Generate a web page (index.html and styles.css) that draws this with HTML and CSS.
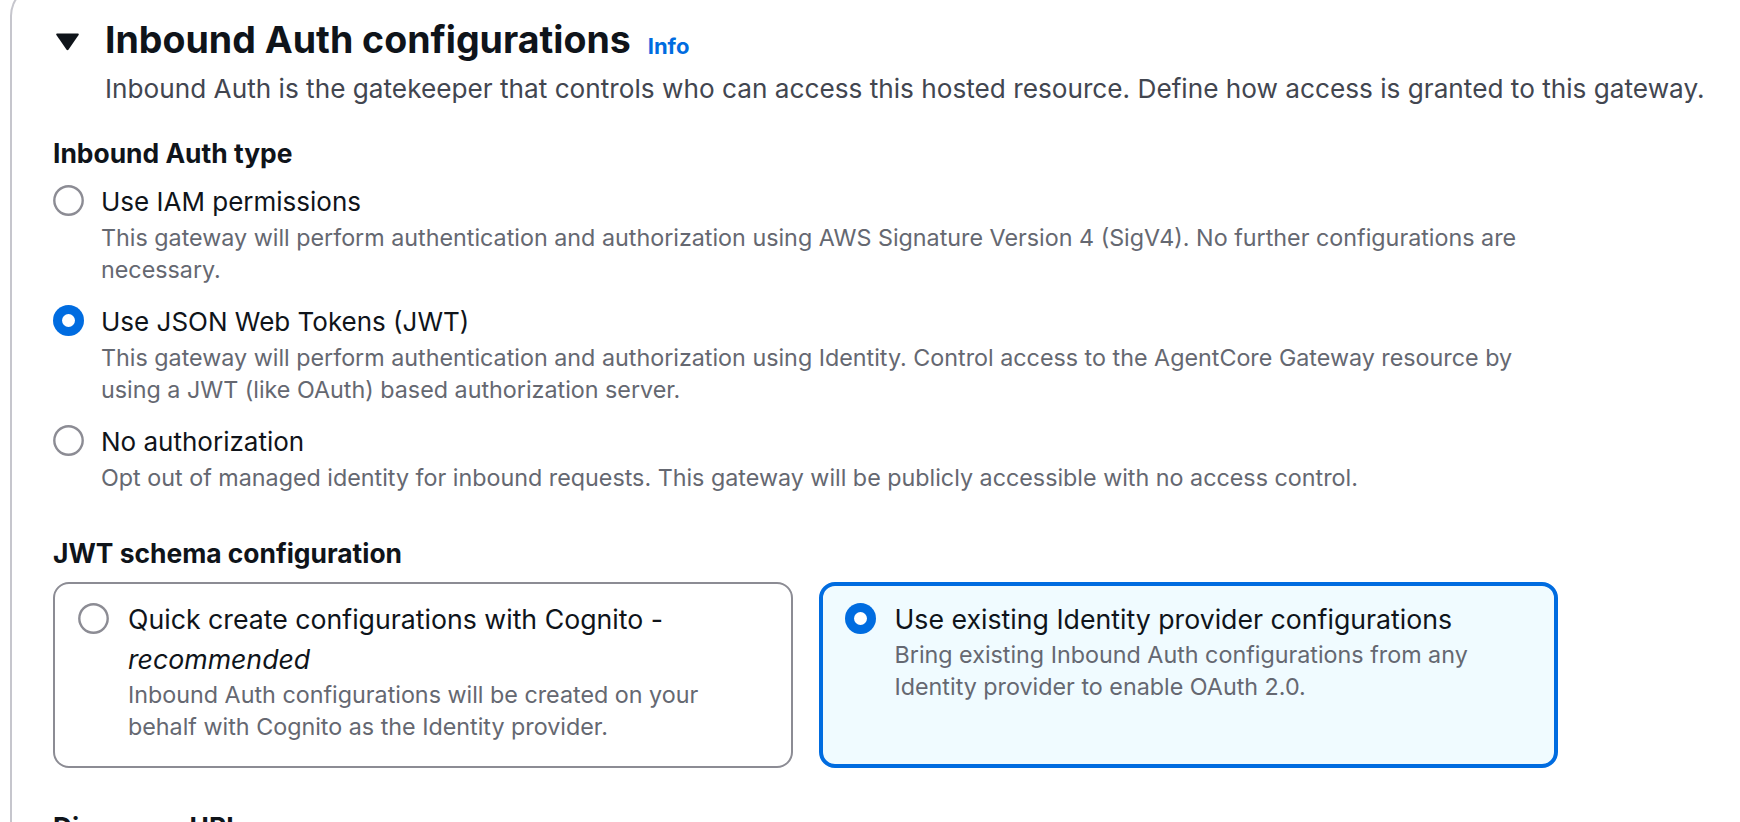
FILE: index.html
```html
<!DOCTYPE html>
<html lang="en">
<head>
<meta charset="utf-8">
<title>Inbound Auth configurations</title>
<link rel="stylesheet" href="styles.css">
</head>
<body>
<div class="container">
  <div class="section-header">
    <span class="caret">
      <svg viewBox="0 0 25 19" width="25" height="19" aria-hidden="true"><path d="M2 1.5 H23 Q24.5 1.5 23.6 3 L13.6 17.6 Q12.5 19 11.4 17.6 L1.4 3 Q0.5 1.5 2 1.5 Z" fill="#0f141a"/></svg>
    </span>
    <h2 class="title">Inbound Auth configurations<a class="info" href="#">Info</a></h2>
  </div>
  <p class="header-desc">Inbound Auth is the gatekeeper that controls who can access this hosted resource. Define how access is granted to this gateway.</p>

  <div class="content">
    <div class="field">
      <div class="field-label">Inbound Auth type</div>
      <div class="radio-group">
        <div class="radio">
          <svg class="radio-ctl" viewBox="0 0 31 31" aria-hidden="true"><circle cx="15.5" cy="15.5" r="14.2" fill="#fff" stroke="#8c8c94" stroke-width="2.4"/></svg>
          <div class="radio-text">
            <div class="radio-label">Use IAM permissions</div>
            <div class="radio-desc">This gateway will perform authentication and authorization using AWS Signature Version 4 (SigV4). No further configurations are<br>necessary.</div>
          </div>
        </div>
        <div class="radio">
          <svg class="radio-ctl" viewBox="0 0 31 31" aria-hidden="true"><circle cx="15.5" cy="15.5" r="15.5" fill="#006ce0"/><circle cx="15.5" cy="15.5" r="6.5" fill="#fff"/></svg>
          <div class="radio-text">
            <div class="radio-label">Use JSON Web Tokens (JWT)</div>
            <div class="radio-desc">This gateway will perform authentication and authorization using Identity. Control access to the AgentCore Gateway resource by<br>using a JWT (like OAuth) based authorization server.</div>
          </div>
        </div>
        <div class="radio">
          <svg class="radio-ctl" viewBox="0 0 31 31" aria-hidden="true"><circle cx="15.5" cy="15.5" r="14.2" fill="#fff" stroke="#8c8c94" stroke-width="2.4"/></svg>
          <div class="radio-text">
            <div class="radio-label">No authorization</div>
            <div class="radio-desc">Opt out of managed identity for inbound requests. This gateway will be publicly accessible with no access control.</div>
          </div>
        </div>
      </div>
    </div>

    <div class="field">
      <div class="field-label">JWT schema configuration</div>
      <div class="tiles">
        <div class="tile">
          <svg class="radio-ctl" viewBox="0 0 31 31" aria-hidden="true"><circle cx="15.5" cy="15.5" r="14.2" fill="#fff" stroke="#8c8c94" stroke-width="2.4"/></svg>
          <div class="radio-text">
            <div class="tile-label">Quick create configurations with Cognito - <em>recommended</em></div>
            <div class="radio-desc">Inbound Auth configurations will be created on your<br>behalf with Cognito as the Identity provider.</div>
          </div>
        </div>
        <div class="tile selected">
          <svg class="radio-ctl" viewBox="0 0 31 31" aria-hidden="true"><circle cx="15.5" cy="15.5" r="15.5" fill="#006ce0"/><circle cx="15.5" cy="15.5" r="6.5" fill="#fff"/></svg>
          <div class="radio-text">
            <div class="tile-label">Use existing Identity provider configurations</div>
            <div class="radio-desc">Bring existing Inbound Auth configurations from any<br>Identity provider to enable OAuth 2.0.</div>
          </div>
        </div>
      </div>
    </div>

    <div class="field">
      <div class="field-label">Discovery URL</div>
    </div>
  </div>
</div>
</body>
</html>
```

FILE: styles.css
```css
html, body {
  margin: 0;
  background: #ffffff;
}

body {
  font-family: Inter, Roboto, "Liberation Sans", sans-serif;
  color: #0f141a;
  overflow: hidden;
  height: 822px;
}

.container {
  margin: -16px 0 0 10px;
  border-top: 2px solid #c6c6cd;
  border-left: 2px solid #c6c6cd;
  border-top-left-radius: 32px;
  padding: 33px 0 0 41px;
  min-height: 900px;
}

.section-header {
  display: flex;
  align-items: center;
  gap: 24px;
  height: 48px;
}

.caret {
  width: 28px;
  height: 48px;
  display: flex;
  align-items: center;
  justify-content: center;
  flex: none;
}

.caret svg {
  margin-top: -3px;
}

.title {
  margin: 0;
  font-size: 37.5px;
  font-weight: 700;
  line-height: 48px;
  white-space: nowrap;
}

.info {
  font-size: 22px;
  font-weight: 700;
  color: #006ce0;
  text-decoration: none;
  margin-left: 17px;
  vertical-align: -1px;
}

.header-desc {
  margin: 4px 0 0 52px;
  font-size: 26.2px;
  line-height: 36px;
  color: #424650;
  white-space: nowrap;
}

.content {
  width: 1505px;
  margin-top: 27px;
  display: flex;
  flex-direction: column;
  gap: 40px;
}

.field-label {
  font-size: 26.4px;
  font-weight: 700;
  line-height: 38px;
}

.radio-group {
  margin-top: 10px;
  display: flex;
  flex-direction: column;
  gap: 16px;
}

.radio {
  display: flex;
  gap: 17px;
}

.radio-ctl {
  width: 31px;
  height: 31px;
  flex: none;
  margin-top: 3px;
}

.radio-label {
  font-size: 26px;
  line-height: 40px;
}

.radio-desc {
  font-size: 23.3px;
  line-height: 32px;
  color: #656871;
}

.tiles {
  margin-top: 10px;
  display: grid;
  grid-template-columns: 1fr 1fr;
  gap: 26px;
}

.tile {
  border: 2px solid #8c8c94;
  border-radius: 16px;
  padding: 15px 23px 23px;
  display: flex;
  gap: 19px;
}

.tile .radio-ctl {
  margin-top: 4px;
}

.tile.selected {
  border: 4px solid #006ce0;
  background: #f0fbff;
  padding: 13px 21px 21px 22px;
}

.tile-label {
  font-size: 26.7px;
  line-height: 40px;
}
```
